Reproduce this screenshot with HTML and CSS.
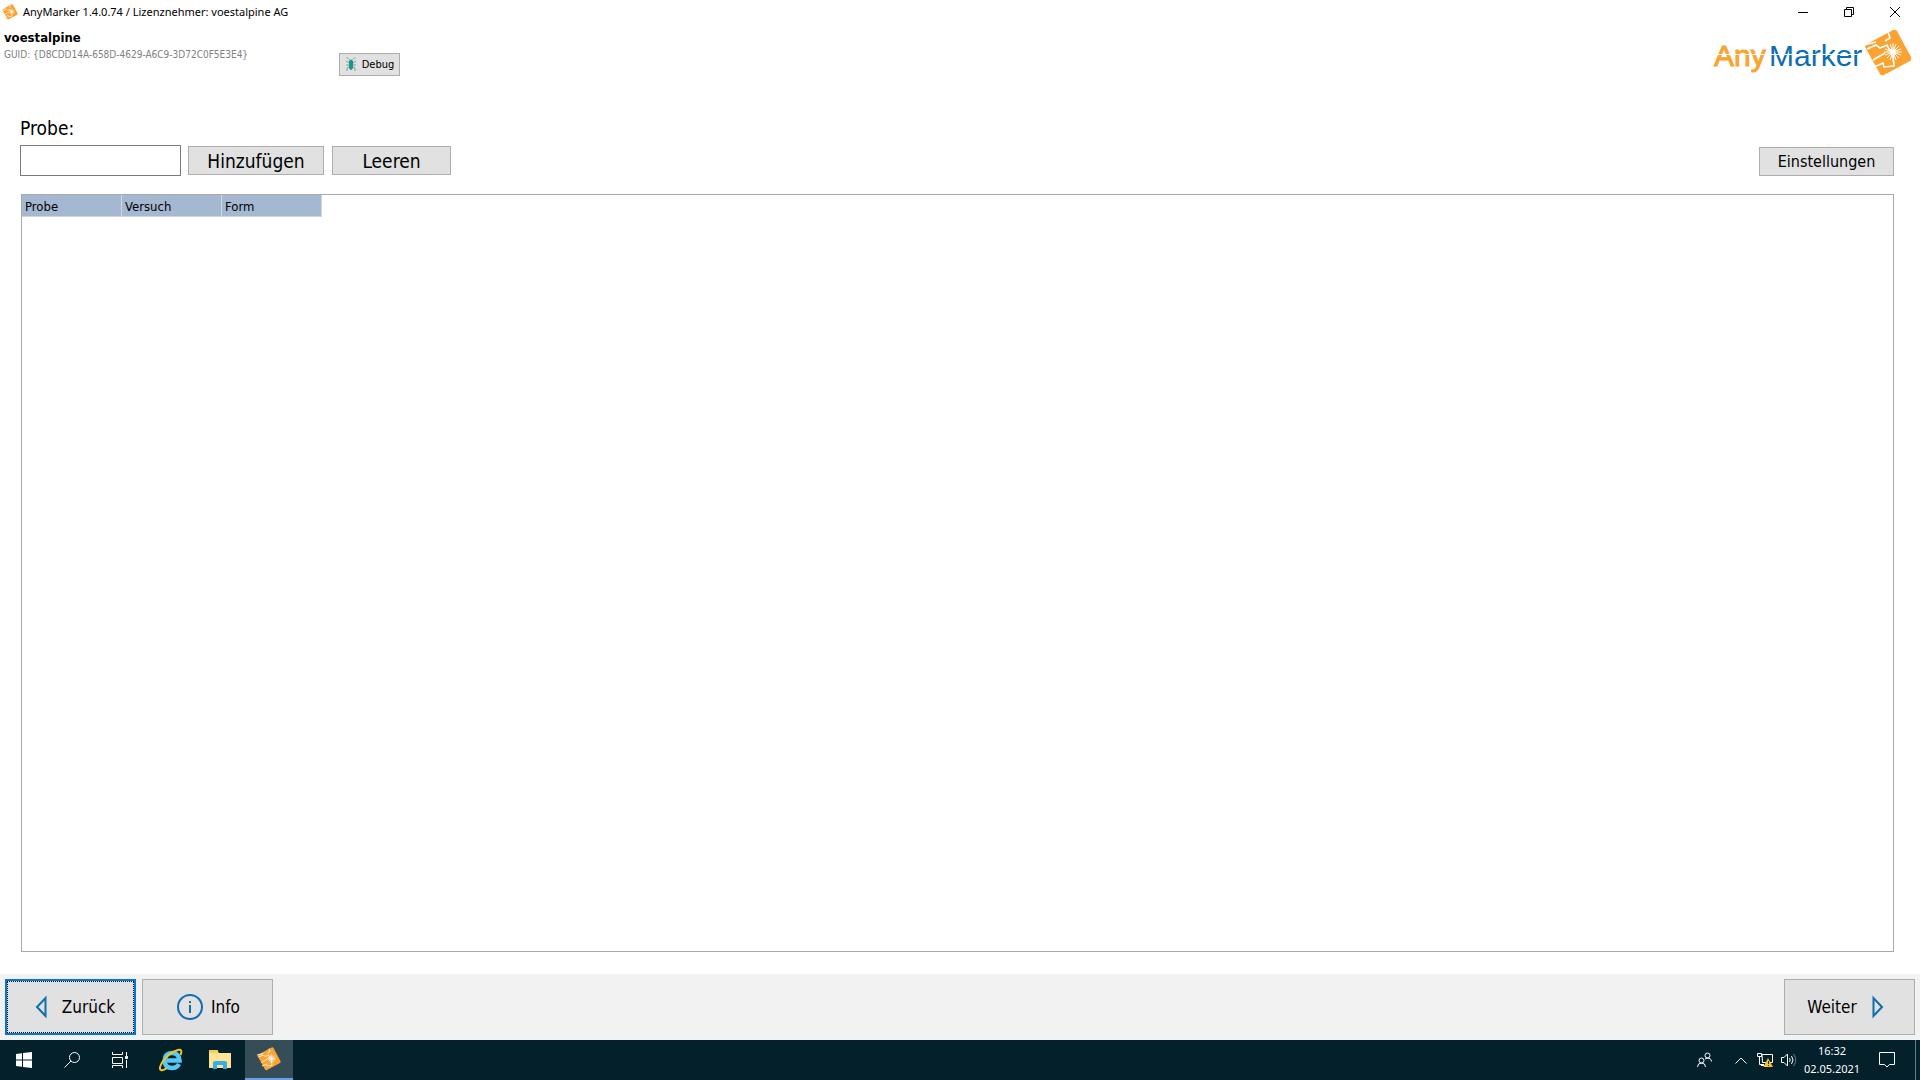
FILE: index.html
```html
<!DOCTYPE html>
<html lang="de">
<head>
<meta charset="utf-8">
<title>AnyMarker 1.4.0.74</title>
<link rel="stylesheet" href="styles.css">
</head>
<body>
<svg class="defs" aria-hidden="true">
  <symbol id="chip" viewBox="0 0 48 48">
    <path fill="#faa332" d="M3 15 29 1q3-1 4 1l14 26q1 3-1 4L20 46q-3 1-4-1L1 18q0-2 2-3z"/>
    <path fill="none" stroke="#fff" stroke-width="1.600" d="M0 16l12-3M3 20l9-4 4 3 7-3 3 6M24 3l2 6-5 3M9 31l12-7M29 26l1 11-10 1-1-4-9 4"/>
    <path stroke="#fff" stroke-width="1" d="M29 14v18M20 23h18M23 17l12 12M35 17 23 29M26 15l6 16M32 15l-6 16M21 20l16 6M37 20l-16 6"/>
    <circle cx="29" cy="23" r="3" fill="#fff"/>
  </symbol>
</svg>
<header class="titlebar">
  <svg class="app-icon"><use href="#chip"/></svg>
  <h1 class="title">AnyMarker 1.4.0.74 / Lizenznehmer: voestalpine AG</h1>
  <button class="caption" aria-label="Minimieren"><svg width="10" height="10"><path d="M0 5.500h10"/></svg></button>
  <button class="caption" aria-label="Verkleinern"><svg width="10" height="10"><path d="M.5 2.500h7v7h-7zM2.500 2.500v-2h7v7h-2"/></svg></button>
  <button class="caption" aria-label="Schließen"><svg width="10" height="10"><path d="M0 0l10 10M10 0 0 10"/></svg></button>
</header>
<section class="banner">
  <div class="license">
    <strong class="company">voestalpine</strong>
    <span class="guid">GUID: {D8CDD14A-658D-4629-A6C9-3D72C0F5E3E4}</span>
  </div>
  <button class="button debug">
    <svg width="12" height="15" viewBox="0 0 12 15"><path fill="none" stroke="#79c9c4" d="M5 3 3 1H1M7 3l2-2h2"/><path fill="none" stroke="#8a9c9c" d="M4 6 1 4M4 8H1M4 10l-2 1v3M8 6l3-2M8 8h3M8 10l2 1v3"/><path fill="#16998d" d="M4 4q2-3 4 0v7q-2 4-4 0z"/></svg>
    Debug
  </button>
  <svg class="logo" width="200" height="50" viewBox="0 0 200 50" role="img" aria-label="AnyMarker">
    <text class="logo-any" x="1" y="37">Any</text>
    <text class="logo-marker" x="56" y="37">Marker</text>
    <path stroke="#fff" stroke-width="1" d="M0 25.500h149"/>
    <use href="#chip" x="151" y="0" width="48" height="48"/>
  </svg>
</section>
<main class="content">
  <form class="toolbar" onsubmit="return false">
    <label class="label" for="probe">Probe:</label>
    <div class="controls">
      <input class="field" id="probe" type="text">
      <button class="button add">Hinzufügen</button>
      <button class="button clear" type="reset">Leeren</button>
      <button class="button settings" type="button">Einstellungen</button>
    </div>
  </form>
  <div class="grid">
    <table class="samples">
      <thead><tr><th scope="col">Probe</th><th scope="col">Versuch</th><th scope="col">Form</th></tr></thead>
      <tbody></tbody>
    </table>
  </div>
</main>
<nav class="wizard">
  <button class="button step back"><svg width="12" height="24" viewBox="0 0 12 24"><path class="arrow" d="M10.500 3v18L2 12z"/></svg>Zurück</button>
  <button class="button step info"><svg width="26" height="26" viewBox="0 0 26 26"><circle class="ring" cx="13" cy="13" r="12"/><path fill="#0d6eb0" d="M12 7h2v2h-2zM12 11h2v8h-2z"/></svg>Info</button>
  <button class="button step next">Weiter<svg width="12" height="24" viewBox="0 0 12 24"><path class="arrow" d="M1.500 3v18L10 12z"/></svg></button>
</nav>
<footer class="taskbar">
  <button class="task" aria-label="Start"><svg width="16" height="16" viewBox="0 0 16 16"><path fill="#fff" d="M0 2l6-.8v6.300H0zM7 1l9-1v7.500H7zM0 8.500h6v6.300L0 14zM7 8.500h9V16l-9-1z"/></svg></button>
  <button class="task" aria-label="Suchen"><svg class="line" width="16" height="16" viewBox="0 0 16 16"><circle cx="10.500" cy="5.500" r="5"/><path d="M7 9 .5 15.500"/></svg></button>
  <button class="task" aria-label="Taskansicht"><svg class="line" width="16" height="16" viewBox="0 0 16 16"><path d="M.5 0v2.500h10V0M.5 5.500h10v6H.5zM.5 16v-2.500h10V16M14.500 0v4M14.500 8v8"/><path fill="#fff" d="M13.500 4.500h2v2h-2z"/></svg></button>
  <button class="task pinned" aria-label="Internet Explorer"><svg width="24" height="24" viewBox="0 0 24 24"><path fill="none" stroke="#55c8f3" stroke-width="4.500" d="M6 12.500h14.500Q20 5 13 5T5.500 13q.5 7 7.500 7 5 0 7-4"/><path fill="none" stroke="#f3c326" stroke-width="2" d="M21.500 7Q24 1 19 2 11 4 4 13-1 21 2 22q2 1 6-2"/></svg></button>
  <button class="task pinned" aria-label="Explorer"><svg width="22" height="20" viewBox="0 0 22 20"><path fill="#e8b83a" d="M0 1h9l1 2h11v3H0z"/><path fill="#fde393" d="M0 3h22v15H0z"/><path fill="#f6ce55" d="M0 0h9v3H0z"/><path fill="#35ade8" d="M4 19v-6q0-2 2-2h10q2 0 2 2v6h-4v-4H8v4z"/></svg></button>
  <button class="task pinned active" aria-label="AnyMarker"><svg width="24" height="24"><use href="#chip"/></svg></button>
  <div class="tray">
    <button class="tray-item people" aria-label="Kontakte"><svg class="line" width="16" height="16" viewBox="0 0 16 16"><circle cx="4.500" cy="8.500" r="2.500"/><path d="M.5 15q0-4 4-4t4 4"/><circle cx="10.500" cy="3.500" r="2.500"/><path d="M8 7q2-1.500 4-.8 2.500 1 2.500 3.300"/></svg></button>
    <button class="tray-item" aria-label="Ausgeblendete Symbole"><svg class="line" width="12" height="7" viewBox="0 0 12 7"><path d="M.5 6.500 6 1l5.500 5.500"/></svg></button>
    <button class="tray-item" aria-label="Netzwerk"><svg class="line" width="16" height="16" viewBox="0 0 16 16"><path d="M.5 1.500h4v3h-4zM2.500 4.500v8H7M5 2.500h10.500v8H5.500zM4 13.500h5"/><path fill="#fcc419" stroke="none" d="M11 6l5 9H6.500z"/><path stroke="#222" d="M11.500 9v3M11.500 13v1"/></svg></button>
    <button class="tray-item" aria-label="Lautstärke"><svg class="line" width="16" height="14" viewBox="0 0 16 14"><path d="M.5 4.500H3L6.500 1v12L3 9.500H.5zM8.500 5q1.500 2 0 4M10.500 3q3 4 0 8"/><path opacity=".4" d="M12.500 1q4.500 6 0 12"/></svg></button>
    <time class="clock" datetime="2021-05-02T16:32"><span>16:32</span><span>02.05.2021</span></time>
    <button class="tray-item notices" aria-label="Benachrichtigungen"><svg class="line" width="16" height="16" viewBox="0 0 16 16"><path d="M.5.500h15v12h-5L8 15l-2.500-2.500h-5z"/></svg></button>
    <button class="desktop" aria-label="Desktop anzeigen"></button>
  </div>
</footer>
</body>
</html>
```

FILE: styles.css
```css
* { box-sizing: border-box; }

body {
  display: flex;
  flex-direction: column;
  min-height: 100vh;
  margin: 0;
  background: #fff;
  color: #000;
  font-family: Tahoma, "DejaVu Sans Condensed", "Noto Sans", sans-serif;
}

button { margin: 0; padding: 0; border: 0; background: none; color: inherit; font: inherit; }
svg { flex: none; }
.defs { position: absolute; width: 0; height: 0; }

/* Window frame */
.titlebar { display: flex; align-items: center; height: 23px; padding: 0 2px; }
.app-icon { width: 16px; height: 16px; }
.title {
  flex: 1;
  margin: 0 0 0 5px;
  font: 11px/20px "Segoe UI", "Noto Sans", sans-serif;
}
.caption { display: flex; align-items: center; justify-content: center; width: 46px; height: 20px; }
.caption path { fill: none; stroke: #000; }

.banner { display: flex; align-items: flex-start; height: 93px; padding: 6px 7px 0 4px; }
.license { display: flex; flex-direction: column; width: 335px; }
.company { font-size: 13px; line-height: 18px; }
.guid { color: #808080; font-size: 10px; line-height: 16px; }

.button {
  display: flex;
  align-items: center;
  justify-content: center;
  border: 1px solid #adadad;
  background: #e1e1e1;
}
.debug { gap: 5px; width: 61px; height: 23px; margin-top: 24px; font-size: 11px; }
.logo { margin-left: auto; }
.logo text { font-family: Arial, "Liberation Sans", sans-serif; font-size: 30px; }
.logo-any { fill: #faa332; stroke: #faa332; }
.logo-marker { fill: #0d6eb0; }

/* Sample entry and list */
.content { display: flex; flex: 1; flex-direction: column; padding: 0 26px 22px 20px; }
.label { display: block; font-size: 19px; line-height: 24px; }
.controls { display: flex; align-items: center; margin-top: 5px; font-size: 19px; }
.field { width: 161px; height: 31px; padding: 0 6px; border: 1px solid #7a7a7a; font: inherit; }
.add { width: 136px; height: 29px; margin-left: 7px; }
.clear { width: 119px; height: 29px; margin-left: 8px; }
.settings { align-self: flex-end; width: 135px; height: 29px; margin-left: auto; font-size: 16px; }
.grid { flex: 1; margin: 18px 0 0 1px; border: 1px solid #a9a9a9; }
.samples { width: 300px; border-spacing: 0; table-layout: fixed; }
.samples th {
  height: 22px;
  padding: 2px 3px 0;
  border: solid #d0d6de;
  border-width: 0 1px 1px 0;
  background: #a5b8d1;
  font-size: 13px;
  font-weight: 400;
  line-height: 18px;
  text-align: left;
}

/* Wizard navigation */
.wizard { display: flex; gap: 6px; height: 66px; padding: 5px; background: #f2f2f2; }
.step { width: 131px; height: 56px; font-size: 17px; }
.back { gap: 15px; padding-left: 9px; border: 2px solid #0078d7; outline: 1px dotted #000; outline-offset: -3px; }
.info { gap: 8px; padding-left: 2px; }
.next { gap: 15px; margin-left: auto; padding-right: 8px; }
.arrow, .ring { fill: none; stroke: #0d6eb0; stroke-width: 2; }

/* Taskbar */
.taskbar { display: flex; height: 40px; background: #03202b; color: #fff; }
.task { display: flex; align-items: center; justify-content: center; width: 48px; }
.pinned { margin-left: 1px; }
.task:nth-child(4) { margin-left: 3px; }
.active { border-bottom: 2px solid #6a9ee8; background: #354d57; }
.line { fill: none; stroke: #fff; }
.tray { display: flex; margin-left: auto; }
.tray-item { display: flex; align-items: center; justify-content: center; width: 24px; }
.people { width: 48px; }
.clock {
  display: flex;
  flex-direction: column;
  justify-content: center;
  width: 62px;
  font: 11px/18px "Segoe UI", "Noto Sans", sans-serif;
  text-align: center;
}
.notices { width: 48px; margin-right: 4px; }
.desktop { width: 5px; border-left: 1px solid #6c7d84; }
```
